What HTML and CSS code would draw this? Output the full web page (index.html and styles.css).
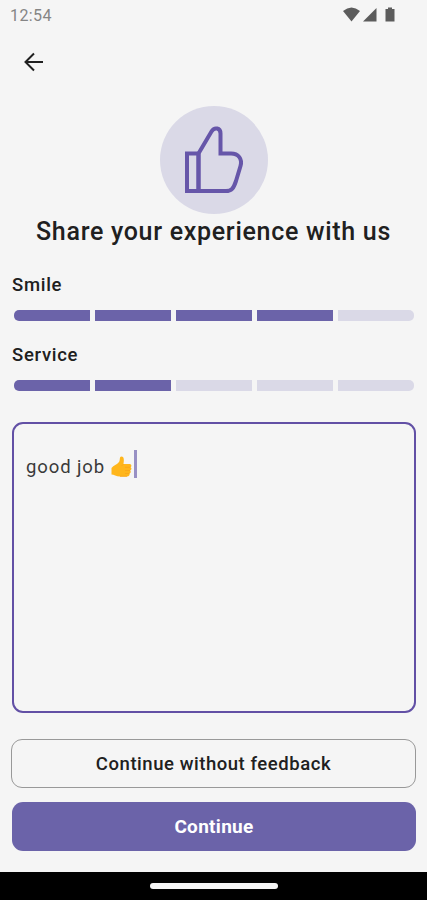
FILE: index.html
```html
<!DOCTYPE html>
<html lang="en">
<head>
    <meta charset="UTF-8" />
    <meta name="viewport" content="width=device-width, initial-scale=1" />
    <title>Share your experience</title>
    <link rel="stylesheet" href="styles.css">
</head>
<body>
    <header class="status-bar">
        <span class="time">12:54</span>
        <svg class="status-icons" width="54" height="16" viewBox="0 0 54 16">
            <path d="M0 4Q8.500 -3 17 4L8.500 14.500Z" />
            <path d="M20 14.500L33.500 1V14.500Z" />
            <path d="M42.500 2H45V0.500H49V2H51.500V14.500H42.500Z" />
        </svg>
    </header>

    <nav class="toolbar">
        <a href="#" class="back" aria-label="Back">
            <svg width="20" height="20" viewBox="0 0 20 20">
                <path d="M10 1.500L1.500 10L10 18.500M2 10H19" />
            </svg>
        </a>
    </nav>

    <main>
        <div class="badge">
            <svg width="108" height="108" viewBox="0 0 108 108">
                <path d="M27 47.500H38.500V85H27Z" />
                <path d="M38.500 47.500L51.500 25.500C54.500 20.500 60.500 22 60.500 27.500V47.500H71C78.500 47.500 82.500 53 80.500 60L76 75C73.500 82.500 71.500 85 66 85H38.500Z" />
            </svg>
        </div>
        <h1>Share your experience with us</h1>

        <!-- RATINGS -->
        <section class="rating">
            <h2>Smile</h2>
            <div class="bar">
                <span class="on"></span><span class="on"></span><span class="on"></span><span class="on"></span><span></span>
            </div>
        </section>
        <section class="rating">
            <h2>Service</h2>
            <div class="bar">
                <span class="on"></span><span class="on"></span><span></span><span></span><span></span>
            </div>
        </section>

        <!-- FEEDBACK -->
        <div class="feedback">
            <span class="typed">good job</span>
            <svg class="emoji" width="21" height="21" viewBox="0 0 21 21">
                <path fill="#ffb61c" d="M0.500 12C2.500 9.500 6 8.500 8 6C9.500 4 8 0.500 10.500 0.500C13.500 0.500 13 5 12.500 8H18.500C20.500 8 21 10.500 19.500 11.300C21 12 20.700 14 19.200 14.500C20.200 15.500 19.800 17 18.500 17.500C19 19 18 20.500 16 20.500H9C5 20.500 3 18.500 0.500 18.500Z" />
                <path fill="none" stroke="#f9a51a" stroke-width="0.8" d="M12.500 8L10.500 10M14 11.300H19.300M14 14.500H19M14 17.500H18.300M9 20.300H16" />
            </svg>
            <span class="caret"></span>
        </div>

        <button type="button" class="outline">Continue without feedback</button>
        <button type="button" class="primary">Continue</button>
    </main>

    <footer class="gesture-bar"><span></span></footer>
</body>
</html>
```
FILE: styles.css
```css
* { box-sizing: border-box; }
body { margin: 0; height: 900px; display: flex; flex-direction: column; overflow: hidden; background: #f5f5f5; color: #202020; font-family: Roboto, sans-serif; }

.status-bar { height: 32px; padding: 7px 30px 0 10px; display: flex; justify-content: space-between; }
.time { font-size: 16px; line-height: 18px; letter-spacing: 0.4px; color: #858585; }
.status-icons { fill: #5c5c5c; }

.toolbar { height: 74px; padding: 20px 24px 0; }
.back { display: block; width: 20px; height: 20px; }
.back svg { display: block; fill: none; stroke: #202020; stroke-width: 2; }

main { flex: 1; padding: 0 11px; display: flex; flex-direction: column; }
.badge { width: 108px; height: 108px; margin: 0 auto; border-radius: 50%; background: #dad9e7; }
.badge svg { display: block; fill: none; stroke: #6656a9; stroke-width: 4; }
h1 { margin: 2px 0 26px; font-size: 25px; line-height: 32px; font-weight: 500; letter-spacing: 0.7px; text-align: center; white-space: nowrap; }

.rating { height: 70px; padding: 0 2px 0 1px; }
.rating h2 { margin: 0 0 14px; font-size: 18.5px; line-height: 22px; font-weight: 500; letter-spacing: 0.7px; }
.bar { height: 11px; margin-left: 2px; display: flex; gap: 5px; }
.bar span { flex: 1; background: #dad9e7; }
.bar span.on { background: #6b63a9; }
.bar span:first-child { border-radius: 5px 0 0 5px; }
.bar span:last-child { border-radius: 0 5px 5px 0; }

.feedback { height: 291px; margin: 8px 0 26px 1px; padding: 26px 12px; display: flex; align-items: flex-start; border: 2px solid #6250a5; border-radius: 11px; }
.typed { margin-right: 6px; font-size: 18.5px; line-height: 34px; letter-spacing: 0.9px; color: #3a3a3a; }
.emoji { margin-top: 6px; }
.caret { width: 3px; height: 28px; margin-left: 2px; background: #9890c4; }

button { height: 49px; padding: 0; font-family: inherit; font-size: 18.5px; letter-spacing: 0.55px; border-radius: 11px; }
.outline { margin-bottom: 14px; font-weight: 500; color: #202020; background: none; border: 1px solid #999; }
.primary { margin-left: 1px; font-size: 19px; font-weight: 700; letter-spacing: 0.3px; color: #fff; background: #6b63a9; border: none; }

.gesture-bar { height: 28px; display: flex; justify-content: center; background: #000; }
.gesture-bar span { width: 128px; height: 6px; margin-top: 11px; border-radius: 3px; background: #f5f5f5; }
```
